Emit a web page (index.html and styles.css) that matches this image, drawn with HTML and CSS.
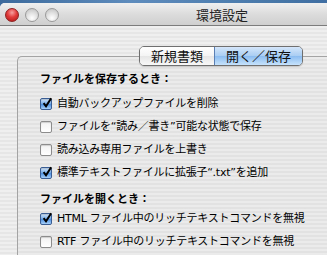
FILE: index.html
```html
<!DOCTYPE html>
<html lang="ja">
<head>
<meta charset="utf-8">
<title>環境設定</title>
<link rel="stylesheet" href="styles.css">
</head>
<body>
<div class="desktop">
  <div class="window">
    <div class="titlebar">
      <div class="lights">
        <span class="light close"></span>
        <span class="light"></span>
        <span class="light"></span>
      </div>
      <div class="title">環境設定</div>
    </div>
    <div class="content">
      <div class="tabs">
        <span class="tab">新規書類</span>
        <span class="tab selected">開く／保存</span>
      </div>
      <div class="group">
        <div class="heading">ファイルを保存するとき：</div>
        <label class="row"><span class="box checked"><svg viewBox="0 0 12 12"><path d="M2.6 6.2 L5 9.3 L10.2 1.2" fill="none" stroke="#000" stroke-width="2"/></svg></span><span class="lbl">自動バックアップファイルを削除</span></label>
        <label class="row"><span class="box"></span><span class="lbl">ファイルを“読み／書き”可能な状態で保存</span></label>
        <label class="row"><span class="box"></span><span class="lbl">読み込み専用ファイルを上書き</span></label>
        <label class="row"><span class="box checked"><svg viewBox="0 0 12 12"><path d="M2.6 6.2 L5 9.3 L10.2 1.2" fill="none" stroke="#000" stroke-width="2"/></svg></span><span class="lbl">標準テキストファイルに拡張子“.txt”を追加</span></label>
        <div class="heading second">ファイルを開くとき：</div>
        <label class="row"><span class="box checked"><svg viewBox="0 0 12 12"><path d="M2.6 6.2 L5 9.3 L10.2 1.2" fill="none" stroke="#000" stroke-width="2"/></svg></span><span class="lbl">HTML ファイル中のリッチテキストコマンドを無視</span></label>
        <label class="row"><span class="box"></span><span class="lbl">RTF ファイル中のリッチテキストコマンドを無視</span></label>
      </div>
    </div>
  </div>
</div>
</body>
</html>
```

FILE: styles.css
```css
html, body {
  margin: 0;
  padding: 0;
  overflow: hidden;
  width: 327px;
  height: 255px;
}
body {
  font-family: "DejaVu Sans", "Noto Sans CJK JP", sans-serif;
  color: #000;
}
.desktop {
  background: linear-gradient(90deg, #3c6a9c, #5e8cbd 40%, #3f6fa2);
  padding-top: 3px;
  height: 252px;
  width: 327px;
  overflow: hidden;
}
.window {
  width: 444px;
  height: 260px;
  border-radius: 5px 5px 0 0;
  overflow: hidden;
  background: #eee;
}
.titlebar {
  height: 22px;
  background: linear-gradient(#f0f0f0, #dcdcdc 50%, #cfcfcf);
  border-bottom: 1px solid #7c7c7c;
  display: grid;
  grid-template-columns: 1fr;
  align-items: center;
}
.lights, .title {
  grid-row: 1;
  grid-column: 1;
}
.lights {
  display: flex;
  gap: 6px;
  padding-left: 5px;
  align-self: center;
}
.light {
  width: 14px;
  height: 14px;
  border-radius: 50%;
  box-sizing: border-box;
  border: 1px solid #9a9a9a;
  background: radial-gradient(circle at 50% 75%, #ffffff 0%, #e6e6e6 40%, #bdbdbd 100%);
}
.light.close {
  border-color: #8e2020;
  background: radial-gradient(circle at 50% 30%, #f6a0a0 0%, #e23c3c 45%, #b01515 100%);
}
.title {
  text-align: center;
  font-size: 13px;
  font-family: "Noto Sans CJK JP", sans-serif;
  color: #222;
  line-height: 22px;
  padding-top: 1px;
}
.content {
  background: repeating-linear-gradient(#efefef 0, #efefef 2px, #e6e6e6 2px, #e6e6e6 4px);
  padding: 20px 0 0 17px;
  height: 240px;
}
.tabs {
  display: flex;
  margin-left: 122px;
  margin-bottom: -10px;
  position: relative;
  z-index: 1;
  width: 164px;
  height: 20px;
  box-sizing: border-box;
  border: 1px solid #6f6f6f;
  border-radius: 5px;
  overflow: hidden;
  box-shadow: 0 1px 1px rgba(0,0,0,0.15);
}
.tab {
  font-family: "Noto Sans CJK JP", sans-serif;
  font-size: 13px;
  line-height: 18px;
  text-align: center;
  background: linear-gradient(#ffffff, #f4f4f4 50%, #e6e6e6 51%, #f8f8f8);
  width: 74px;
  color: #111;
}
.tab.selected {
  flex: 1;
  border-left: 1px solid #5a7fb5;
  background: linear-gradient(#d4e6fa, #a9cdf3 50%, #8bbcf0 51%, #c6e2fc);
}
.group {
  border: 1px solid #a4a4a4;
  border-right: none;
  border-radius: 5px 0 0 0;
  background: repeating-linear-gradient(#ebebeb 0, #ebebeb 2px, #e2e2e2 2px, #e2e2e2 4px);
  padding: 13px 0 0 22px;
  height: 220px;
}
.heading {
  font-family: "Noto Sans CJK JP", sans-serif;
  font-weight: bold;
  font-size: 11px;
  line-height: 16px;
  margin-bottom: 6px;
}
.heading.second {
  margin-top: 6px;
  margin-bottom: 1px;
}
.row {
  display: flex;
  align-items: center;
  height: 23px;
  gap: 5px;
}
.box {
  width: 12px;
  height: 12px;
  box-sizing: border-box;
  border: 1px solid #8c8c8c;
  border-radius: 2px;
  background: linear-gradient(#f2f2f2, #ffffff);
  box-shadow: inset 0 1px 1px rgba(0,0,0,0.15);
  display: flex;
  align-items: center;
  justify-content: center;
  position: relative;
}
.box.checked {
  border-color: #3a5e94;
  background: linear-gradient(#d6e8fb, #6fa7e6 50%, #4a8ee0 51%, #a6d0fa);
}
.box svg {
  width: 12px;
  height: 12px;
  position: absolute;
  left: 0px;
  top: -2px;
}
.lbl {
  font-size: 11px;
  line-height: 16px;
  letter-spacing: -0.25px;
}
```
